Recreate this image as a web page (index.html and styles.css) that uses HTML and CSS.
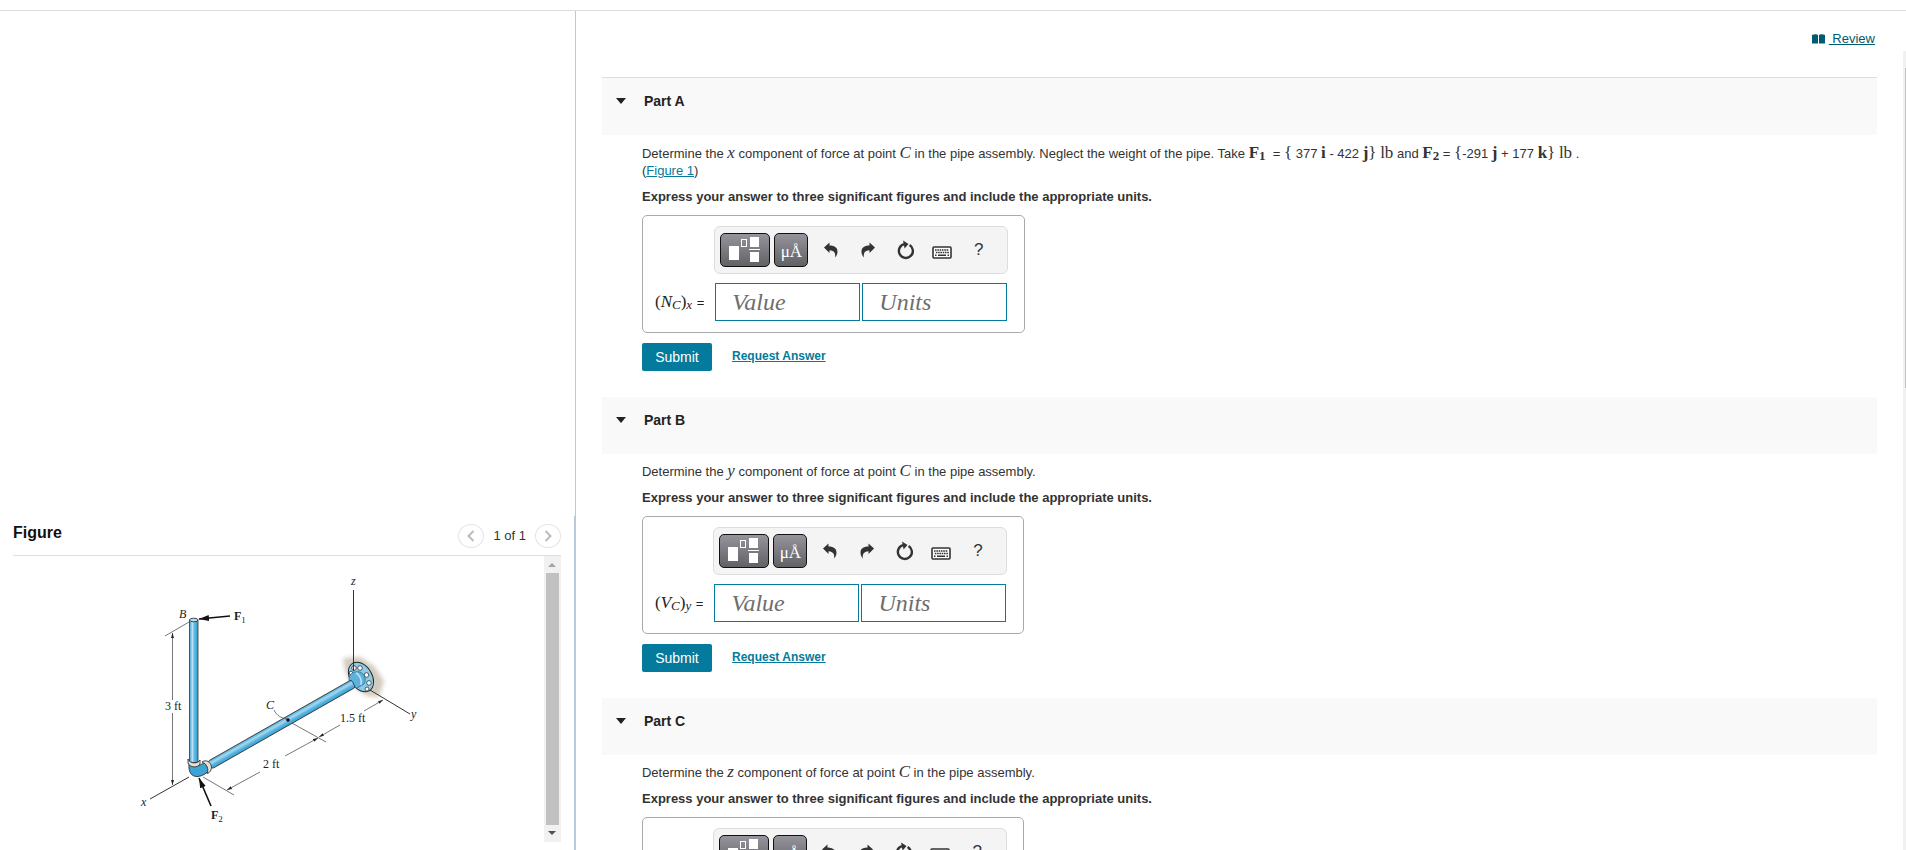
FILE: index.html
```
<!DOCTYPE html>
<html lang="en">
    <head>
        <meta charset="utf-8">
        <title>Pipe Assembly</title>
        <link rel="stylesheet" href="styles.css">
    </head>
    <body>
        <!-- shared icons -->
        <svg class="hidden">
            <symbol id="icon_templates" viewBox="0 0 32 26">
                <rect x="0" y="9" width="10" height="14" fill="#fff"/>
                <rect x="12.5" y="2.5" width="5" height="7" fill="none" stroke="#fff"/>
                <rect x="21" y="0" width="9" height="10" fill="#fff"/>
                <rect x="20" y="12" width="11" height="1" fill="#fff"/>
                <rect x="21" y="15" width="9" height="10" fill="#fff"/>
            </symbol>
            <symbol id="icon_undo" viewBox="0 0 14 16">
                <path d="M0 5.5 L5.5 0.5 V3.5 C11 3.5 13.5 6 13.5 9.5 C13.5 12 12.5 14 11 15.5 C11.8 11.5 10.5 8.5 5.5 8.2 V11 Z" fill="#333"/>
            </symbol>
            <symbol id="icon_reset" viewBox="0 0 18 20">
                <path d="M13.6 5 A7 7 0 1 1 8 4.2" fill="none" stroke="#333" stroke-width="2.4"/>
                <path d="M7 0.5 L12.5 4 L8.6 8.6 Z" fill="#333"/>
            </symbol>
            <symbol id="icon_keyboard" viewBox="0 0 20 13">
                <rect x="1" y="1" width="18" height="11" rx="1" fill="#fff" stroke="#333" stroke-width="1.6"/>
                <path d="M3 4 H17 M3.8 6.5 H17" stroke="#333" stroke-width="1.6" stroke-dasharray="1.6 0.7"/>
                <path d="M3 9.2 H4.5 M6 9.2 H14 M15.5 9.2 H17" stroke="#333" stroke-width="1.6"/>
            </symbol>
        </svg>

        <div class="layout">
            <div class="left_panel">
                <div class="figure_pane">
                    <div class="figure_header">
                        <h2>Figure</h2>
                        <div class="pager">
                            <button class="round_button" aria-label="Previous figure">
                                <svg width="8" height="12" viewBox="0 0 8 12"><path d="M6.5 1 L1.5 6 L6.5 11" fill="none" stroke="#bbb" stroke-width="2"/></svg>
                            </button>
                            <span>1 of 1</span>
                            <button class="round_button" aria-label="Next figure">
                                <svg width="8" height="12" viewBox="0 0 8 12"><path d="M1.5 1 L6.5 6 L1.5 11" fill="none" stroke="#bbb" stroke-width="2"/></svg>
                            </button>
                        </div>
                    </div>
                    <div class="figure_body">
                        <div class="figure_image">
                            <svg width="300" height="280" viewBox="0 0 300 280" role="img" aria-label="Pipe assembly">
                                <defs>
                                    <linearGradient id="pipe_v" x1="0" x2="1" y1="0" y2="0">
                                        <stop offset="0" stop-color="#4aa0cc"/>
                                        <stop offset="0.35" stop-color="#b5e0f3"/>
                                        <stop offset="0.6" stop-color="#5cb7e2"/>
                                        <stop offset="1" stop-color="#2f9fd8"/>
                                    </linearGradient>
                                    <linearGradient id="pipe_d" x1="0" x2="0" y1="0" y2="1">
                                        <stop offset="0" stop-color="#4aa9d6"/>
                                        <stop offset="0.35" stop-color="#a5d9f0"/>
                                        <stop offset="0.65" stop-color="#5ab3de"/>
                                        <stop offset="1" stop-color="#2f9fd8"/>
                                    </linearGradient>
                                    <filter id="soft" x="-20%" y="-20%" width="140%" height="140%"><feGaussianBlur stdDeviation="2"/></filter>
                                    <marker id="tip" viewBox="0 0 10 8" refX="10" refY="4" markerWidth="10" markerHeight="8" markerUnits="userSpaceOnUse" orient="auto"><path d="M0 1 L10 4 L0 7 Z" fill="#111"/></marker>
                                    <marker id="dim" viewBox="0 0 5 4" refX="5" refY="2" markerWidth="5" markerHeight="4" markerUnits="userSpaceOnUse" orient="auto"><path d="M0 0.5 L5 2 L0 3.5 Z" fill="#222"/></marker>
                                </defs>
                                <!-- wall shadow -->
                                <path d="M213 98 L230 97 L244 106 L254 121 L249 137 L237 136 L222 126 L215 110 Z" fill="#d3cbbe" filter="url(#soft)"/>
                                <!-- axes -->
                                <path d="M230 124 L280 154" stroke="#333"/>
                                <path d="M59 217 L20 239" stroke="#333"/>
                                <!-- dimension lines -->
                                <g fill="none" stroke="#555" stroke-width="0.8">
                                    <path d="M59 62 L35 76"/>
                                    <path d="M42.5 140 V73" marker-end="url(#dim)"/>
                                    <path d="M42.5 153 V225" marker-end="url(#dim)"/>
                                    <path d="M73 217 L104 235"/>
                                    <path d="M130 212 L97 230" marker-end="url(#dim)"/>
                                    <path d="M155 196 L188 178" marker-end="url(#dim)"/>
                                    <path d="M160 162 L196 182"/>
                                    <path d="M210 165 L189 177" marker-end="url(#dim)"/>
                                    <path d="M234 151 L253 140" marker-end="url(#dim)"/>
                                </g>
                                <!-- flange -->
                                <ellipse cx="231" cy="117" rx="11" ry="16" transform="rotate(-32 231 117)" fill="#8fcbe6" stroke="#222" stroke-width="0.9"/>
                                <g fill="#fff" stroke="#333" stroke-width="0.8">
                                    <circle cx="224" cy="108" r="2.3"/>
                                    <circle cx="230" cy="108" r="2.3"/>
                                    <circle cx="236.500" cy="115" r="2.300"/>
                                    <circle cx="239" cy="123" r="2.3"/>
                                    <circle cx="237" cy="129" r="2"/>
                                    <circle cx="221" cy="113" r="1.8"/>
                                </g>
                                <path d="M219 118 C220 112 226 111 230 112 C235 114 236.5 120 234 124 L227 128 C222 127 219 123 219 118 Z" fill="#5cb2dc" stroke="#276d94" stroke-width="0.8"/>
                                <path d="M226 113 C230 115 232 120 231 125" fill="none" stroke="#c3e6f5" stroke-width="1.5"/>
                                <path d="M223.5 30 V111" stroke="#333"/>
                                <!-- pipes -->
                                <g transform="translate(80 205) rotate(-29.6)">
                                    <rect x="0" y="-4.3" width="165" height="8.6" rx="2" fill="url(#pipe_d)" stroke="#333" stroke-width="0.8"/>
                                </g>
                                <rect x="59.5" y="60" width="8.5" height="143" fill="url(#pipe_v)" stroke="#333" stroke-width="0.8"/>
                                <ellipse cx="63.75" cy="60" rx="4.25" ry="1.8" fill="#b5e0f3" stroke="#222" stroke-width="0.8"/>
                                <!-- elbow -->
                                <path d="M59 203 C58 213 62 217 68 216.5 C73 216 77 213 79 210 L75 203 C71 204 70 205 69 206 L68 203 Z" fill="#3fa3d5" stroke="#222" stroke-width="0.8"/>
                                <path d="M58 199 V203 C60 208 68 208 70 204 V200 C68 204 60 204 58 199 Z" fill="#e8e0d2" stroke="#222" stroke-width="0.8"/>
                                <path d="M72 202 C76 199 81 202 81.5 207 C81.5 210 80 213 77 213.5 C79 209 77 204 72 202 Z" fill="#e8e0d2" stroke="#222" stroke-width="0.8"/>
                                <!-- point C -->
                                <path d="M144 150 C147 156 151 158 157 159" fill="none" stroke="#555" stroke-width="0.8"/>
                                <circle cx="158" cy="160" r="1.8" fill="#111"/>
                                <!-- forces -->
                                <path d="M100 56 L69 59" stroke="#111" stroke-width="1.6" marker-end="url(#tip)"/>
                                <path d="M81 246 L69 218" stroke="#111" stroke-width="1.6" marker-end="url(#tip)"/>
                                <g class="figure_text">
                                    <text class="italic" x="49" y="58">B</text>
                                    <text class="bold" x="104" y="60">F<tspan class="figure_sub" dy="3">1</tspan></text>
                                    <text class="italic" x="221" y="25">z</text>
                                    <text x="35" y="150">3 ft</text>
                                    <text class="italic" x="136" y="149">C</text>
                                    <text x="210" y="162">1.5 ft</text>
                                    <text class="italic" x="281" y="158">y</text>
                                    <text x="133" y="208">2 ft</text>
                                    <text class="italic" x="11" y="246">x</text>
                                    <text class="bold" x="81" y="259">F<tspan class="figure_sub" dy="3">2</tspan></text>
                                </g>
                            </svg>
                        </div>
                        <div class="scrollbar">
                            <span class="arrow_up"></span>
                            <span class="thumb"></span>
                            <span class="arrow_down"></span>
                        </div>
                    </div>
                </div>
            </div>

            <main class="right_panel">
                <div class="review">
                    <svg width="13" height="10" viewBox="0 0 13 10"><path d="M0 1 C2 0 5 0 6 1 V9.5 H0 Z M7 1 C8 0 11 0 13 1 V9.5 H7 Z" fill="#005a70"/></svg>
                    <a href="#">&nbsp;Review</a>
                </div>

                <section class="part">
                    <div class="part_header first">
                        <span class="caret"></span>
                        <h3>Part A</h3>
                    </div>
                    <div class="part_body">
                        <p>Determine the <i class="math">x</i> component of force at point <i class="math">C</i> in the pipe assembly. Neglect the weight of the pipe. Take <b class="math">F<sub>1</sub></b>&nbsp; = <span class="math">{</span> 377 <b class="math">i</b> - 422 <b class="math">j</b><span class="math">}</span> <span class="math">lb</span> and <b class="math">F<sub>2</sub></b>&nbsp;= <span class="math">{</span>-291 <b class="math">j</b> + 177 <b class="math">k</b><span class="math">}</span> <span class="math">lb</span> .<br>(<a href="#">Figure 1</a>)</p>
                        <p class="instructions">Express your answer to three significant figures and include the appropriate units.</p>
                        <div class="answer_box">
                            <div class="toolbar">
                                <button class="dark_button templates" aria-label="Templates"><svg width="32" height="26"><use href="#icon_templates"/></svg></button>
                                <button class="dark_button symbols" aria-label="Symbols">μÅ</button>
                                <button class="tool" aria-label="Undo"><svg width="14" height="16"><use href="#icon_undo"/></svg></button>
                                <button class="tool flip" aria-label="Redo"><svg width="14" height="16"><use href="#icon_undo"/></svg></button>
                                <button class="tool" aria-label="Reset"><svg width="18" height="20"><use href="#icon_reset"/></svg></button>
                                <button class="tool keyboard" aria-label="Keyboard shortcuts"><svg width="20" height="13"><use href="#icon_keyboard"/></svg></button>
                                <button class="tool" aria-label="Help">?</button>
                            </div>
                            <label for="value_a"><span class="math">(<i>N<sub>C</sub></i>)<sub><i>x</i></sub></span> =</label>
                            <div class="fields">
                                <input type="text" id="value_a" placeholder="Value">
                                <input type="text" id="units_a" placeholder="Units" aria-label="Units">
                            </div>
                        </div>
                        <div class="actions">
                            <button class="submit">Submit</button>
                            <a href="#">Request Answer</a>
                        </div>
                    </div>
                </section>

                <section class="part">
                    <div class="part_header">
                        <span class="caret"></span>
                        <h3>Part B</h3>
                    </div>
                    <div class="part_body">
                        <p>Determine the <i class="math">y</i> component of force at point <i class="math">C</i> in the pipe assembly.</p>
                        <p class="instructions">Express your answer to three significant figures and include the appropriate units.</p>
                        <div class="answer_box">
                            <div class="toolbar">
                                <button class="dark_button templates" aria-label="Templates"><svg width="32" height="26"><use href="#icon_templates"/></svg></button>
                                <button class="dark_button symbols" aria-label="Symbols">μÅ</button>
                                <button class="tool" aria-label="Undo"><svg width="14" height="16"><use href="#icon_undo"/></svg></button>
                                <button class="tool flip" aria-label="Redo"><svg width="14" height="16"><use href="#icon_undo"/></svg></button>
                                <button class="tool" aria-label="Reset"><svg width="18" height="20"><use href="#icon_reset"/></svg></button>
                                <button class="tool keyboard" aria-label="Keyboard shortcuts"><svg width="20" height="13"><use href="#icon_keyboard"/></svg></button>
                                <button class="tool" aria-label="Help">?</button>
                            </div>
                            <label for="value_b"><span class="math">(<i>V<sub>C</sub></i>)<sub><i>y</i></sub></span> =</label>
                            <div class="fields">
                                <input type="text" id="value_b" placeholder="Value">
                                <input type="text" id="units_b" placeholder="Units" aria-label="Units">
                            </div>
                        </div>
                        <div class="actions">
                            <button class="submit">Submit</button>
                            <a href="#">Request Answer</a>
                        </div>
                    </div>
                </section>

                <section class="part">
                    <div class="part_header">
                        <span class="caret"></span>
                        <h3>Part C</h3>
                    </div>
                    <div class="part_body">
                        <p>Determine the <i class="math">z</i> component of force at point <i class="math">C</i> in the pipe assembly.</p>
                        <p class="instructions">Express your answer to three significant figures and include the appropriate units.</p>
                        <div class="answer_box">
                            <div class="toolbar">
                                <button class="dark_button templates" aria-label="Templates"><svg width="32" height="26"><use href="#icon_templates"/></svg></button>
                                <button class="dark_button symbols" aria-label="Symbols">μÅ</button>
                                <button class="tool" aria-label="Undo"><svg width="14" height="16"><use href="#icon_undo"/></svg></button>
                                <button class="tool flip" aria-label="Redo"><svg width="14" height="16"><use href="#icon_undo"/></svg></button>
                                <button class="tool" aria-label="Reset"><svg width="18" height="20"><use href="#icon_reset"/></svg></button>
                                <button class="tool keyboard" aria-label="Keyboard shortcuts"><svg width="20" height="13"><use href="#icon_keyboard"/></svg></button>
                                <button class="tool" aria-label="Help">?</button>
                            </div>
                            <label for="value_c"><span class="math">(<i>V<sub>C</sub></i>)<sub><i>z</i></sub></span> =</label>
                            <div class="fields">
                                <input type="text" id="value_c" placeholder="Value">
                                <input type="text" id="units_c" placeholder="Units" aria-label="Units">
                            </div>
                        </div>
                    </div>
                </section>
            </main>

            <div class="page_scrollbar"><span></span></div>
        </div>
    </body>
</html>
```
FILE: styles.css
```
* {
    box-sizing: border-box;
}
body {
    margin: 0;
    padding-top: 10px;
    height: 100vh;
    overflow: hidden;
    font-family: Arial, "Liberation Sans", sans-serif;
    font-size: 13px;
    line-height: 17px;
    color: #333;
    background-color: white;
}
button {
    font-family: inherit;
    padding: 0;
    cursor: pointer;
}
a {
    color: #047a9c;
}
.hidden {
    display: none;
}
.layout {
    display: flex;
    height: 100%;
    border-top: 1px solid #dedede;
}

/* figure side */
.left_panel {
    flex: 0 0 30.22%;
    display: flex;
    flex-direction: column;
    justify-content: flex-end;
    border-right: 1px solid #b8c9dc;
}
.figure_pane {
    height: 334px;
    display: flex;
    flex-direction: column;
    padding: 0 13px 8px;
    border-right: 1px solid #b8c9dc;
}
.figure_header {
    display: flex;
    justify-content: space-between;
    align-items: center;
    height: 40px;
    border-bottom: 1px solid #dedede;
}
.figure_header h2 {
    margin: 0;
    padding-bottom: 6px;
    font-size: 16px;
    color: #111;
}
.pager {
    display: flex;
    align-items: center;
    gap: 9px;
}
.round_button {
    display: flex;
    align-items: center;
    justify-content: center;
    width: 26px;
    height: 24px;
    border: 1px solid #e4e4e4;
    border-radius: 50%;
    background: white;
}
.figure_body {
    flex: 1;
    display: flex;
    min-height: 0;
}
.figure_image {
    flex: 1;
    padding: 4px 0 0 117px;
}
.figure_text {
    font-family: "Liberation Serif", serif;
    font-size: 12px;
    fill: #222;
}
.italic {
    font-style: italic;
}
.bold {
    font-weight: bold;
}
.figure_sub {
    font-size: 9px;
    font-weight: normal;
}
.scrollbar {
    width: 17px;
    display: flex;
    flex-direction: column;
    align-items: center;
    padding: 7px 0;
    gap: 6px;
    background-color: #f1f1f1;
}
.thumb {
    flex: 1;
    width: 13px;
    background-color: #c1c1c1;
}
.arrow_up, .arrow_down {
    border: 4px solid transparent;
}
.arrow_up {
    border-top: 0;
    border-bottom-color: #a3a3a3;
}
.arrow_down {
    border-bottom: 0;
    border-top-color: #505050;
}

/* question side */
.right_panel {
    flex: 1;
    padding: 0 26px;
    overflow-y: auto;
    scrollbar-width: none;
}
.review {
    display: flex;
    align-items: center;
    justify-content: flex-end;
    height: 66px;
    padding: 0 2px 11px 0;
    gap: 4px;
}
.review a {
    color: #005a70;
}
.part {
    margin-bottom: 26px;
}
.part_header {
    display: flex;
    align-items: center;
    gap: 18px;
    height: 57px;
    padding: 0 14px 11px;
    background-color: #f9f9f9;
}
.part_header.first {
    height: 58px;
    border-top: 1px solid #dedede;
}
.part_header h3 {
    margin: 0;
    font-size: 14px;
    color: #222;
}
.caret {
    border: 5px solid transparent;
    border-top: 6px solid #222;
    border-bottom: 0;
}
.part_body {
    padding: 9px 0 0 40px;
}
.first + .part_body {
    padding-top: 10px;
}
.part_body p {
    margin: 0 0 9px;
}
.part_body .instructions {
    margin-bottom: 10px;
    font-weight: bold;
}
.math {
    font-family: "Liberation Serif", serif;
    font-size: 17px;
    line-height: 1px;
}
.math sub {
    font-size: 13px;
    vertical-align: -2px;
}
.answer_box {
    display: inline-grid;
    grid-template-columns: auto auto;
    align-items: center;
    row-gap: 9px;
    padding: 10px 16px 11px 12px;
    border: 1px solid #aaa;
    border-radius: 5px;
    vertical-align: top;
}
.answer_box label {
    padding-right: 10px;
    color: #222;
}
.answer_box .math {
    margin-right: 1px;
}
.toolbar {
    grid-column: 2;
    display: flex;
    align-items: center;
    width: 294px;
    height: 48px;
    padding: 0 5px;
    border: 1px solid #ddd;
    border-radius: 6px;
    background-color: #f4f4f4;
}
.dark_button {
    display: flex;
    align-items: center;
    justify-content: center;
    height: 34px;
    margin-right: 4px;
    border: 1px solid #111;
    border-radius: 5px;
    background: linear-gradient(#96949c, #626164);
    color: white;
}
.templates {
    width: 50px;
}
.symbols {
    width: 34px;
    padding-top: 3px;
    font-family: "Liberation Serif", serif;
    font-size: 17px;
}
.tool {
    display: flex;
    align-items: center;
    justify-content: center;
    width: 37px;
    height: 34px;
    border: 0;
    background: none;
    font-size: 17px;
    color: #333;
}
.flip svg {
    transform: scaleX(-1);
}
.keyboard {
    padding-top: 4px;
}
.fields {
    display: flex;
    gap: 2px;
    padding-left: 1px;
}
.fields input {
    width: 145px;
    height: 38px;
    padding: 0 16px;
    border: 1px solid #047a9c;
    border-radius: 0;
    font-family: "Liberation Serif", serif;
    font-size: 24px;
    font-style: italic;
}
.fields input::placeholder {
    color: #6e6e6e;
}
.actions {
    display: flex;
    align-items: center;
    gap: 20px;
    margin-top: 10px;
    font-size: 12px;
    font-weight: bold;
}
.actions a {
    padding-bottom: 2px;
}
.submit {
    width: 70px;
    height: 28px;
    border: 0;
    border-radius: 2px;
    background-color: #047a9c;
    color: white;
    font-size: 14px;
}
.page_scrollbar {
    width: 3px;
    margin-top: 40px;
    padding: 17px 0 0 2px;
    background-color: #f1f1f1;
}
.page_scrollbar span {
    display: block;
    height: 320px;
    background-color: #c1c1c1;
}
```
